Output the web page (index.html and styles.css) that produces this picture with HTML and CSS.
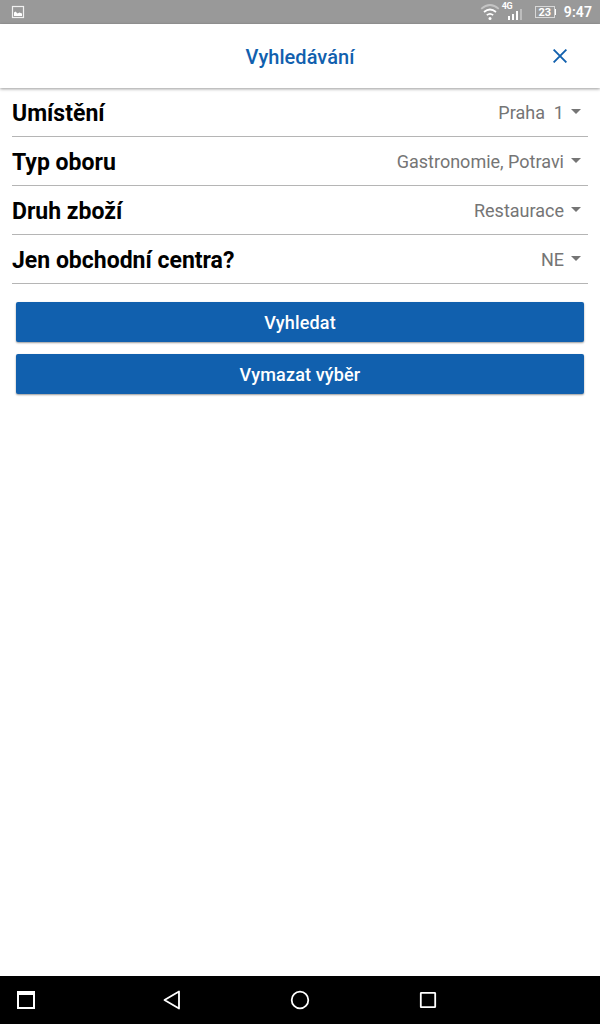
FILE: index.html
```html
<!DOCTYPE html>
<html lang="cs">
  <head>
    <meta charset="UTF-8" />
    <title>Vyhledávání</title>
    <link rel="stylesheet" href="styles.css">
  </head>
  <body>
    <div class="status-bar">
      <svg class="picture" width="14" height="14" viewBox="0 0 14 14">
        <rect x="1.5" y="1.5" width="11" height="11" fill="none" stroke="#f0f0f0" stroke-width="1.2" />
        <path d="M3 11V7.5L4.5 6.5L6.5 8.5L8.5 7.5L11 8.5V11Z" fill="#fff" />
      </svg>
      <svg class="wifi" width="20" height="20" viewBox="0 0 20 20" fill="none" stroke-width="1.7">
        <path d="M1.2 6.8Q10 -0.8 18.8 6.8" stroke="#c4c4c4" />
        <path d="M4 10Q10 5 16 10M6.8 13.2Q10 10.6 13.2 13.2" stroke="#fff" />
        <circle cx="10" cy="16.6" r="1.5" fill="#fff" />
      </svg>
      <div class="signal">
        <span class="network">4G</span>
        <svg width="15" height="11" viewBox="0 0 15 11">
          <path d="M0 7h2v4H0zM4 5h2v6H4zM8 2h2v9H8z" fill="#fff" />
          <path d="M12 0h2v11h-2z" fill="#bdbdbd" />
        </svg>
      </div>
      <div class="battery">23</div>
      <span class="clock">9:47</span>
    </div>

    <header class="app-bar">
      <h1>Vyhledávání</h1>
      <button class="close-btn" aria-label="Zavřít">
        <svg width="14" height="14" viewBox="0 0 14 14">
          <path d="M0.6 0.6L13.4 13.4M13.4 0.6L0.6 13.4" fill="none" stroke="#1160ae" stroke-width="1.9" />
        </svg>
      </button>
    </header>

    <main>
      <div class="row">
        <span class="label">Umístění</span>
        <span class="value">Praha&nbsp; 1</span>
      </div>
      <div class="row">
        <span class="label">Typ oboru</span>
        <span class="value">Gastronomie, Potravi</span>
      </div>
      <div class="row">
        <span class="label">Druh zboží</span>
        <span class="value">Restaurace</span>
      </div>
      <div class="row">
        <span class="label">Jen obchodní centra?</span>
        <span class="value">NE</span>
      </div>

      <div class="buttons">
        <button class="btn">Vyhledat</button>
        <button class="btn">Vymazat výběr</button>
      </div>
    </main>

    <nav class="nav-bar">
      <svg width="20" height="20" viewBox="0 0 20 20">
        <path d="M1 1H19V19H1ZM3 5V17H17V5Z" fill="#fff" fill-rule="evenodd" />
      </svg>
      <svg width="20" height="20" viewBox="0 0 20 20">
        <path d="M17 1.5V18.5L2.5 10Z" fill="none" stroke="#fff" stroke-width="1.8" stroke-linejoin="round" />
      </svg>
      <svg width="20" height="20" viewBox="0 0 20 20">
        <circle cx="10" cy="10" r="8.3" fill="none" stroke="#fff" stroke-width="1.8" />
      </svg>
      <svg width="20" height="20" viewBox="0 0 20 20">
        <rect x="2.8" y="2.8" width="14.4" height="14.4" rx="0.5" fill="none" stroke="#fff" stroke-width="1.8" />
      </svg>
    </nav>
  </body>
</html>
```
FILE: styles.css
```css
* {
  box-sizing: border-box;
}

body {
  display: flex;
  flex-direction: column;
  height: 100vh;
  margin: 0;
  overflow: hidden;
  background: #fff;
  font-family: Roboto, sans-serif;
}

svg {
  display: block;
}

/* Status bar */
.status-bar {
  display: flex;
  align-items: center;
  height: 24px;
  padding: 0 8px 0 11px;
  background: #999;
  color: #fff;
}

.picture {
  margin-right: auto;
}

.wifi {
  margin-right: 2px;
}

.signal {
  height: 20px;
  width: 20px;
  margin-right: 13px;
}

.signal svg {
  margin-left: 6px;
}

.network {
  display: block;
  height: 7px;
  font-size: 9px;
  line-height: 8px;
  font-weight: 700;
  letter-spacing: -0.5px;
}

.battery {
  position: relative;
  width: 20px;
  height: 12px;
  margin-right: 9px;
  border: 1px solid #d8d8d8;
  font-size: 11px;
  line-height: 11px;
  font-weight: 700;
  text-align: center;
}

.battery::after {
  content: "";
  position: absolute;
  top: 2px;
  right: -2px;
  width: 1px;
  height: 6px;
  background: #fff;
}

.clock {
  font-size: 14px;
  font-weight: 600;
  letter-spacing: 0.1px;
}

/* Header */
.app-bar {
  display: grid;
  grid-template-columns: 80px 1fr 80px;
  align-items: center;
  height: 64px;
  box-shadow: 0 1px 3px rgba(0, 0, 0, 0.4);
}

.app-bar h1 {
  grid-column: 2;
  margin: 2px 0 0;
  color: #1160ae;
  font-size: 20px;
  font-weight: 500;
  letter-spacing: 0.05px;
  text-align: center;
}

.close-btn {
  justify-self: center;
  padding: 0;
  border: none;
  background: none;
}

/* Form rows */
main {
  flex: 1;
  padding: 0 12px;
}

.row {
  display: flex;
  align-items: center;
  justify-content: space-between;
  height: 49px;
  border-bottom: 1px solid #b5b5b5;
}

.label {
  padding-top: 2px;
  color: #000;
  font-size: 23px;
  font-weight: 700;
}

.value {
  display: flex;
  align-items: center;
  margin-right: 7px;
  color: #757575;
  font-size: 18px;
}

.value::after {
  content: "";
  margin: -1px 0 0 7px;
  border: 5px solid transparent;
  border-top-color: #757575;
  border-bottom: none;
}

/* Buttons */
.buttons {
  display: flex;
  flex-direction: column;
  gap: 12px;
  padding: 18px 4px;
}

.btn {
  height: 40px;
  padding: 1px 0 0;
  border: none;
  border-radius: 2px;
  background: #1160ae;
  box-shadow: 0 1px 2px rgba(0, 0, 0, 0.4);
  color: #fff;
  font-family: inherit;
  font-size: 18px;
  font-weight: 500;
  letter-spacing: 0.15px;
}

/* Navigation bar */
.nav-bar {
  display: grid;
  grid-template-columns: 38px 20px 20px 20px;
  column-gap: 108px;
  align-items: center;
  height: 48px;
  padding-left: 16px;
  background: #000;
}
```
